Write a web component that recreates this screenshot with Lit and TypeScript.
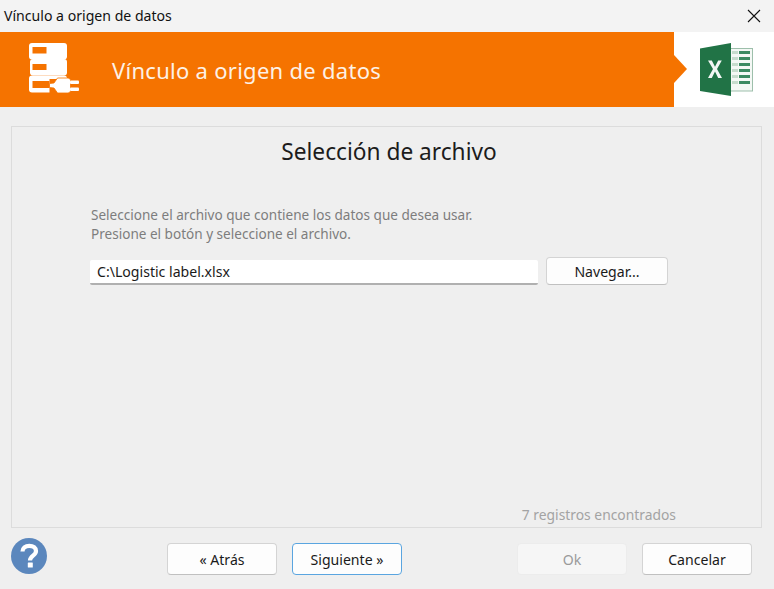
import { LitElement, html, css } from "lit";
import { customElement } from "lit/decorators.js";

@customElement("app-root")
export class AppRoot extends LitElement {
  static styles = css`
    :host { display: block; width: 774px; height: 589px; overflow: hidden; background: #efefef;
      font-family: "Noto Sans", "Open Sans", sans-serif; color: #1a1a1a; font-size: 14px; }
    .titlebar { box-sizing: border-box; height: 32px; background: #f3f3f3; display: flex; align-items: center; justify-content: space-between;
      padding: 0 13px 1px 4px; font-size: 14.1px; color: #111; }
    .close { display: block; }
    .banner { height: 75px; display: flex; background: #fff; }
    .orange { width: 674px; background: #f57300; display: flex; align-items: center; color: #fff; position: relative; }
    .db { margin: 11px 0 0 28px; align-self: flex-start; flex: none; }
    .banner-title { margin-left: 32px; font-size: 22px; letter-spacing: 0.28px; color: #fdf1e6; }
    .arrow { position: absolute; left: 674px; top: 23px; width: 0; height: 0;
      border-left: 13px solid #f57300; border-top: 14px solid transparent; border-bottom: 14px solid transparent; }
    .logo { margin: 10px 0 0 26px; }
    .panel { box-sizing: border-box; width: 751px; height: 402px; margin: 19px 0 0 11px; border: 1px solid #dcdcdc; padding: 0 0 0 78px;
      display: flex; flex-direction: column; background: #efefef; }
    .heading { font-size: 22.7px; text-align: center; margin: 7px 0 0 -73px; line-height: 36px; color: #1c1c1c; }
    .desc { margin-top: 35px; margin-left: 1px; color: #7d7d7d; font-size: 13.57px; line-height: 19px; }
    .row { display: flex; margin-top: 14px; align-items: flex-end; }
    .input { box-sizing: border-box; width: 448px; height: 25px; background: #fff; border-bottom: 2px solid #b0b0b0; border-radius: 2px;
      padding: 0 0 0 7px; line-height: 23px; font-size: 14.1px; color: #1a1a1a; }
    .btn { box-sizing: border-box; display: flex; align-items: center; justify-content: center; background: #fdfdfd;
      border: 1px solid #d4d4d4; border-bottom-color: #c0c0c0; border-radius: 4px; font-size: 14.1px; color: #1a1a1a; }
    .nav { width: 122px; height: 28px; margin-left: 8px; }
    .spacer { flex: 1; }
    .found { align-self: flex-end; margin: 0 85px 2px 0; color: #a3a3a3; font-size: 13.85px; line-height: 20px; }
    .footer { display: flex; align-items: flex-start; height: 32px; margin-top: 15px; padding-left: 11px; }
    .help { flex: none; display: block; margin-top: -5px; }
    .foot-btn { width: 110px; height: 32px; }
    .back { margin-left: 120px; }
    .next { margin-left: 15px; border: 1.5px solid #5aa5e0; }
    .ok { margin-left: 115px; background: #f6f6f6; border-color: #ececec; color: #9a9a9a; }
    .cancel { margin-left: 15px; }
  `;

  render() {
    return html`
      <div class="titlebar">
        <span>Vínculo a origen de datos</span>
        <svg class="close" width="14" height="14" viewBox="0 0 14 14"><path d="M1 1 13 13M13 1 1 13" stroke="#111" stroke-width="1.1" fill="none"/></svg>
      </div>
      <div class="banner">
        <div class="orange">
          <svg class="db" width="52" height="52" viewBox="28 43 52 52">
            <g fill="#fff">
              <rect x="29" y="43" width="38" height="16.500" rx="3"/>
              <rect x="30" y="59" width="37" height="16.500" rx="3"/>
              <rect x="29" y="75.500" width="38" height="17" rx="3"/>
            </g>
            <g fill="#f57300">
              <rect x="32.500" y="47" width="14" height="6.500"/>
              <rect x="32.500" y="64" width="14" height="6"/>
              <rect x="32.500" y="81" width="17" height="7"/>
              <rect x="49.500" y="79" width="20" height="16"/>
            </g>
            <path fill="#fff" stroke="#f57300" stroke-width="0.800" d="M49.500 83.500l4.500-.5 3.500-5h10.500a2.500 2.500 0 0 1 2.500 2.500v10a2.500 2.500 0 0 1-2.500 2.500h-10.500l-3.500-5-4.500-.5z"/>
            <rect x="70" y="80.500" width="9" height="3.500" rx="1" fill="#fff"/><rect x="70" y="87.500" width="9" height="3.500" rx="1" fill="#fff"/>
          </svg>
          <span class="banner-title">Vínculo a origen de datos</span>
          <span class="arrow"></span>
        </div>
        <svg class="logo" width="54" height="54" viewBox="700 42 54 54">
          <rect x="728" y="48.500" width="24.500" height="42.500" fill="#f4f8f5" stroke="#9dbfab" stroke-width="1"/>
          <g fill="#c6dccd">
            <rect x="732" y="51" width="6" height="3"/><rect x="732" y="57" width="6" height="3"/>
            <rect x="732" y="63" width="6" height="3"/><rect x="732" y="69" width="6" height="3"/>
            <rect x="732" y="75" width="6" height="3"/><rect x="732" y="81" width="6" height="3"/>
          </g>
          <g fill="#3c8a62">
            <rect x="739" y="51" width="11" height="3"/><rect x="739" y="57" width="11" height="3"/>
            <rect x="739" y="63" width="11" height="3"/><rect x="739" y="69" width="11" height="3"/>
            <rect x="739" y="75" width="11" height="3"/><rect x="739" y="81" width="11" height="3"/>
          </g>
          <path fill="#217346" d="M700 48.500 731 43v53l-31-5z"/>
          <path fill="#f2f7f4" d="M708 60.500h3.800l3.200 6.200 3.200-6.200h3.600l-4.800 8.500 5 9h-3.800l-3.200-6.400-3.200 6.400h-3.800l5-9z"/>
        </svg>
      </div>
      <div class="panel">
        <div class="heading">Selección de archivo</div>
        <div class="desc">Seleccione el archivo que contiene los datos que desea usar.<br />Presione el botón y seleccione el archivo.</div>
        <div class="row">
          <div class="input">C:\\Logistic label.xlsx</div>
          <div class="btn nav">Navegar...</div>
        </div>
        <div class="spacer"></div>
        <div class="found">7 registros encontrados</div>
      </div>
      <div class="footer">
        <svg class="help" width="36" height="36" viewBox="0 0 36 36">
          <circle cx="18" cy="18" r="18" fill="#5b87bd"/>
          <path fill="none" stroke="#fff" stroke-width="4.200" d="M11.500 13.500c0-3.500 2.800-5.700 6.800-5.700s6.700 2.200 6.700 5.200c0 4.700-6 4.600-6 9.500"/>
          <rect x="16.800" y="24.500" width="5" height="5" fill="#fff" rx="0.500"/>
        </svg>
        <div class="btn foot-btn back">« Atrás</div>
        <div class="btn foot-btn next">Siguiente »</div>
        <div class="btn foot-btn ok">Ok</div>
        <div class="btn foot-btn cancel">Cancelar</div>
      </div>
    `;
  }
}
